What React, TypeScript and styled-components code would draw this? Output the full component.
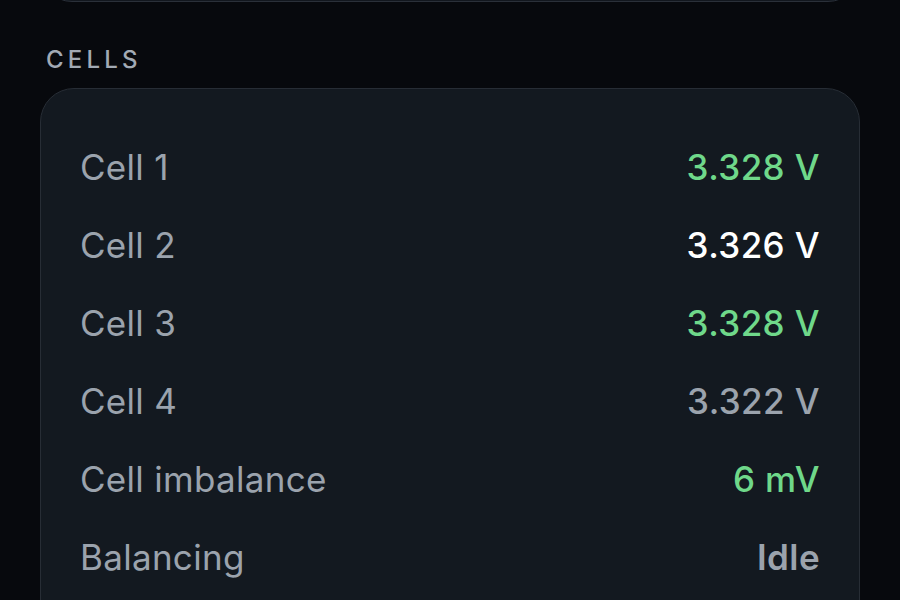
import styled, { createGlobalStyle } from 'styled-components'

const GlobalStyle = createGlobalStyle`
  html, body {
    margin: 0;
    padding: 0;
    background: #07090d;
    overflow: hidden;
  }
  body {
    font-family: Inter, "Noto Sans", "Liberation Sans", sans-serif;
    -webkit-font-smoothing: antialiased;
  }
`

const Screen = styled.div`
  width: 900px;
  height: 600px;
  padding: 0 40px;
  box-sizing: border-box;
  overflow: hidden;
  display: flex;
  flex-direction: column;

  & > * {
    flex-shrink: 0;
  }
`

// the card above, scrolled almost out of view
const PrevCard = styled.div`
  height: 80px;
  margin-top: -78px;
  border-radius: 32px;
  background: #12171e;
  border: 1.5px solid #2a3039;
  box-sizing: border-box;
`

const SectionTitle = styled.div`
  margin: 44px 0 0 6px;
  font-size: 24px;
  line-height: 28px;
  font-weight: 500;
  letter-spacing: 4.2px;
  color: #a2aab4;
`

const Card = styled.div`
  margin-top: 14px;
  border-radius: 34px;
  background: #131920;
  border: 1.5px solid #272d35;
  padding: 39px 39px 40px 39px;
  display: flex;
  flex-direction: column;
`

const Row = styled.div`
  height: 78px;
  display: flex;
  align-items: center;
  justify-content: space-between;
  font-size: 35px;
`

const Label = styled.span`
  color: #9ba3ad;
  font-weight: 400;
  letter-spacing: 0.3px;
`

type Tone = 'good' | 'bright' | 'muted'

const toneColor: Record<Tone, string> = {
  good: '#6fd88a',
  bright: '#ffffff',
  muted: '#9ba3ad',
}

const Value = styled.span<{ $tone: Tone; $strong?: boolean }>`
  color: ${(p) => toneColor[p.$tone]};
  font-weight: ${(p) => (p.$strong ? 600 : 500)};
  letter-spacing: 0.4px;
`

const cells: { label: string; value: string; tone: Tone; strong?: boolean }[] = [
  { label: 'Cell 1', value: '3.328 V', tone: 'good' },
  { label: 'Cell 2', value: '3.326 V', tone: 'bright' },
  { label: 'Cell 3', value: '3.328 V', tone: 'good' },
  { label: 'Cell 4', value: '3.322 V', tone: 'muted' },
  { label: 'Cell imbalance', value: '6 mV', tone: 'good' },
  { label: 'Balancing', value: 'Idle', tone: 'muted', strong: true },
]

export default function App() {
  return (
    <>
      <GlobalStyle />
      <Screen>
        <PrevCard />
        <SectionTitle>CELLS</SectionTitle>
        <Card>
          {cells.map((c) => (
            <Row key={c.label}>
              <Label>{c.label}</Label>
              <Value $tone={c.tone} $strong={c.strong}>
                {c.value}
              </Value>
            </Row>
          ))}
        </Card>
      </Screen>
    </>
  )
}
